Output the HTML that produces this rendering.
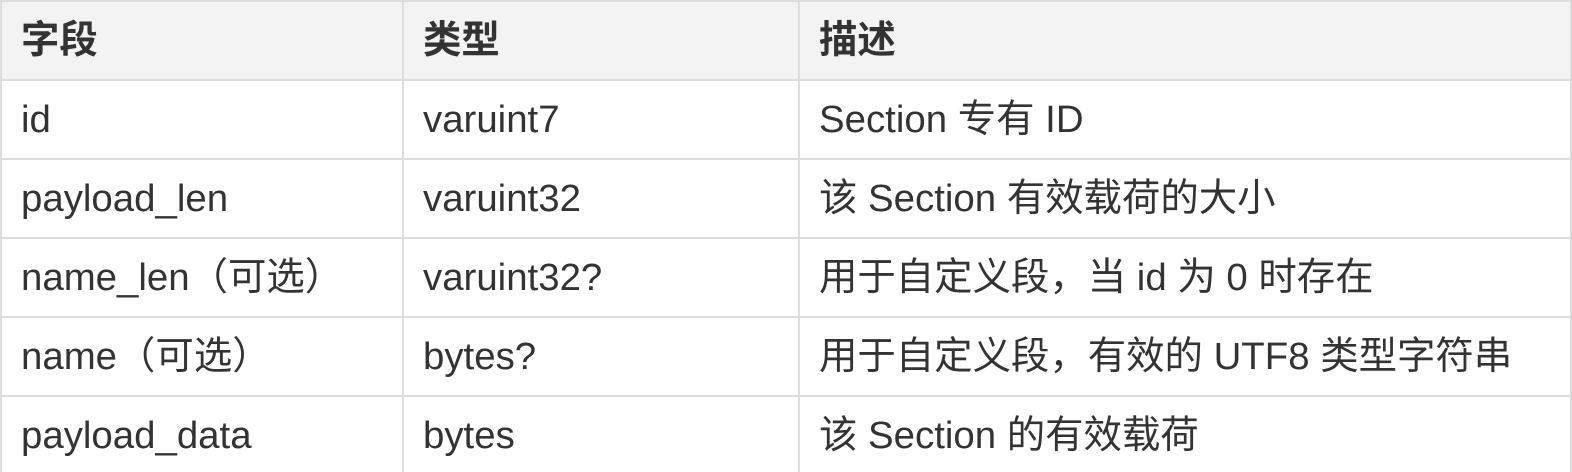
<!DOCTYPE html>
<html><head><meta charset="utf-8"><style>
html,body{margin:0;padding:0;background:#fff;width:1572px;height:472px;overflow:hidden}
table{border-collapse:collapse;font-family:"Liberation Sans","Noto Sans CJK SC",sans-serif;font-size:38.4px;color:#333;table-layout:fixed;width:1572px}
td,th{border:2px solid #ddd;height:77px;line-height:40px;padding:0 0 0 19px;text-align:left;vertical-align:middle;white-space:nowrap}
th{background:#f3f3f3;font-weight:bold;height:77px}
tr:last-child td{border-bottom:none}
</style></head><body>
<table>
<colgroup><col style="width:402px"><col style="width:396px"><col></colgroup>
<tr><th>字段</th><th>类型</th><th>描述</th></tr>
<tr><td>id</td><td>varuint7</td><td>Section 专有 ID</td></tr>
<tr><td>payload_len</td><td>varuint32</td><td>该 Section 有效载荷的大小</td></tr>
<tr><td>name_len（可选）</td><td>varuint32?</td><td>用于自定义段，当 id 为 0 时存在</td></tr>
<tr><td>name（可选）</td><td>bytes?</td><td>用于自定义段，有效的 UTF8 类型字符串</td></tr>
<tr><td>payload_data</td><td>bytes</td><td>该 Section 的有效载荷</td></tr>
</table>
</body></html>
